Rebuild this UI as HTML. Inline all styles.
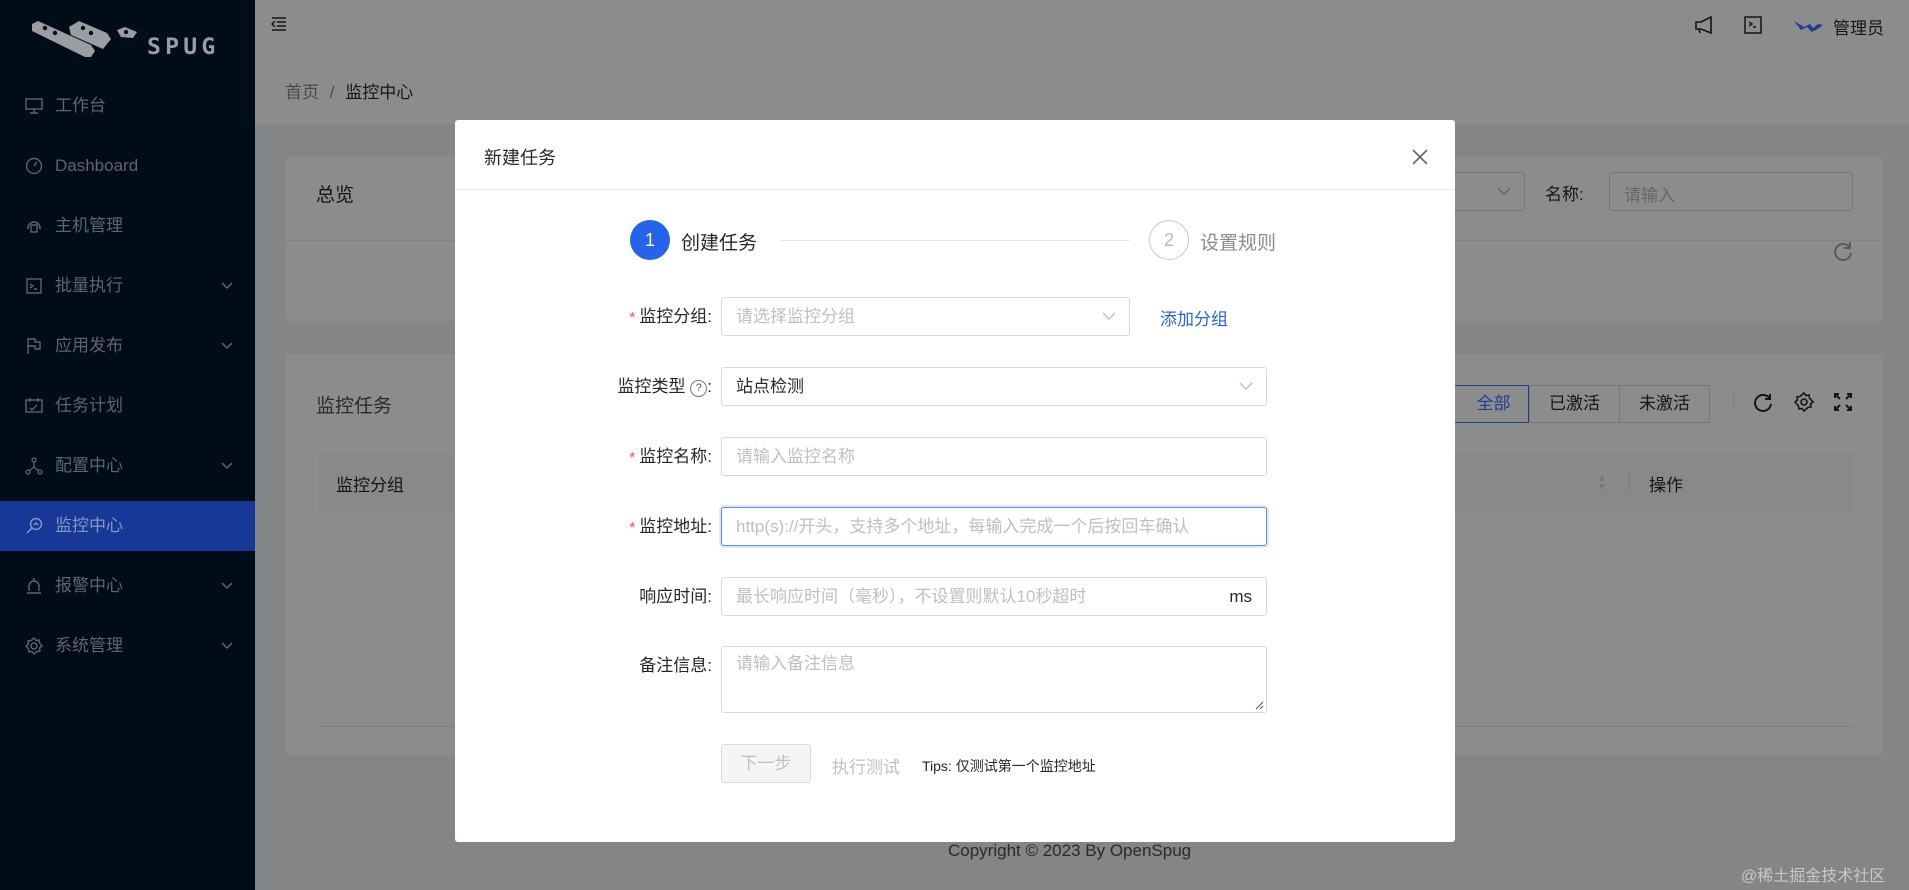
<!DOCTYPE html>
<html><head><meta charset="utf-8"><style>
*{box-sizing:border-box;margin:0;padding:0}
body{width:1909px;height:890px;overflow:hidden;position:relative;background:#848586;font-family:"Liberation Sans","Noto Sans CJK SC",sans-serif;color:#151515}
.a{position:absolute}
.side{left:0;top:0;width:255px;height:890px;background:#000c17}
.mi{position:absolute;left:0;width:255px;height:50px;color:#5d656d;font-size:17px;line-height:50px;padding-left:55px}
.mi svg{position:absolute;left:25px;top:16px}
.mi .ch{position:absolute;left:220px;top:14px}
.mi.act{background:#173896;color:#8796c0}
.card{background:#8c8c8c;border-radius:3px}
.modal{left:455px;top:120px;width:1000px;height:722px;background:#fff;border-radius:3px}
.inp{position:absolute;left:721px;width:546px;height:39px;border:1px solid #d9d9d9;border-radius:3px;font-size:17px;line-height:37px;padding-left:14px;color:#bfbfbf;background:#fff}
.row{position:absolute;left:455px;width:257px;height:39px;line-height:39px;text-align:right;font-size:17px;color:#262626}
.req{color:#ff4d4f;font-size:15px;margin-right:4px}
</style></head><body>
<div class="a side">
 <svg class="a" style="left:31px;top:19px" width="108" height="40" viewBox="0 0 108 40">
  <g fill="#9a9ea3"><path d="M1 5 L7 2 L60 26 L64 32 L60 38 L54 38 L1 12Z"/><path d="M38 8 L48 2 L76 14 L80 20 L72 30 L40 16Z"/><path d="M86 11 L94 8 L106 13 L102 19 L90 18Z"/></g>
  <g fill="#000c17"><circle cx="14" cy="9" r="2.2"/><circle cx="24" cy="14" r="2.2"/><circle cx="52" cy="9" r="2.2"/><circle cx="60" cy="14" r="2.2"/><circle cx="95" cy="13" r="2.2"/></g>
 </svg>
 <div class="a" style="left:147px;top:35px;font-size:22px;font-weight:bold;color:#9a9ea3;letter-spacing:4px;font-family:'DejaVu Sans Mono',monospace;transform:scaleX(1.05);transform-origin:left">SPUG</div>
 <div class="mi" style="top:81px"><svg width="18" height="18" viewBox="0 0 18 18" fill="none" stroke="#5d656d" stroke-width="1.4"><rect x="1" y="2" width="16" height="10"/><path d="M9 12v4M5 16h8"/></svg>工作台</div>
 <div class="mi" style="top:141px"><svg width="18" height="18" viewBox="0 0 18 18" fill="none" stroke="#5d656d" stroke-width="1.4"><circle cx="9" cy="9" r="7.5"/><path d="M9 9l3-4"/></svg>Dashboard</div>
 <div class="mi" style="top:201px"><svg width="18" height="18" viewBox="0 0 18 18" fill="none" stroke="#5d656d" stroke-width="1.4"><path d="M3 11a6 6 0 0 1 12 0M2 11h2M14 11h2"/><rect x="6" y="8" width="6" height="7"/></svg>主机管理</div>
 <div class="mi" style="top:261px"><svg width="18" height="18" viewBox="0 0 18 18" fill="none" stroke="#5d656d" stroke-width="1.4"><rect x="2" y="2" width="14" height="14"/><path d="M5 7l3 2-3 2M9 12h3"/></svg>批量执行<svg class="ch" width="14" height="20" viewBox="0 0 14 20" fill="none" stroke="#5d656d" stroke-width="1.5"><path d="M2 8l5 5 5-5"/></svg></div>
 <div class="mi" style="top:321px"><svg width="18" height="18" viewBox="0 0 18 18" fill="none" stroke="#5d656d" stroke-width="1.4"><path d="M3 17V2h7v3h5v7h-5V9H3"/></svg>应用发布<svg class="ch" width="14" height="20" viewBox="0 0 14 20" fill="none" stroke="#5d656d" stroke-width="1.5"><path d="M2 8l5 5 5-5"/></svg></div>
 <div class="mi" style="top:381px"><svg width="18" height="18" viewBox="0 0 18 18" fill="none" stroke="#5d656d" stroke-width="1.4"><rect x="1" y="3" width="16" height="12"/><path d="M5 1v4M13 1v4M5 11l2 2 5-5"/></svg>任务计划</div>
 <div class="mi" style="top:441px"><svg width="18" height="18" viewBox="0 0 18 18" fill="none" stroke="#5d656d" stroke-width="1.3"><circle cx="9" cy="3" r="2"/><circle cx="3" cy="15" r="2"/><circle cx="15" cy="15" r="2"/><path d="M9 5v5L4 14M9 10l5 4"/></svg>配置中心<svg class="ch" width="14" height="20" viewBox="0 0 14 20" fill="none" stroke="#5d656d" stroke-width="1.5"><path d="M2 8l5 5 5-5"/></svg></div>
 <div class="mi act" style="top:501px"><svg width="18" height="18" viewBox="0 0 18 18" fill="none" stroke="#8796c0" stroke-width="1.5"><circle cx="11" cy="7" r="5.5"/><path d="M7 11l-5 5M9 8l2-2 2 2"/></svg>监控中心</div>
 <div class="mi" style="top:561px"><svg width="18" height="18" viewBox="0 0 18 18" fill="none" stroke="#5d656d" stroke-width="1.4"><path d="M4 14V9a5 5 0 0 1 10 0v5M2 16h14M9 1v2"/></svg>报警中心<svg class="ch" width="14" height="20" viewBox="0 0 14 20" fill="none" stroke="#5d656d" stroke-width="1.5"><path d="M2 8l5 5 5-5"/></svg></div>
 <div class="mi" style="top:621px"><svg width="18" height="18" viewBox="0 0 18 18" fill="none" stroke="#5d656d" stroke-width="1.4"><circle cx="9" cy="9" r="3"/><path d="M9 1l2 2.5 3-.5.5 3L17 9l-2.5 2 .5 3-3 .5L9 17l-2-2.5-3 .5-.5-3L1 9l2.5-2-.5-3 3-.5z"/></svg>系统管理<svg class="ch" width="14" height="20" viewBox="0 0 14 20" fill="none" stroke="#5d656d" stroke-width="1.5"><path d="M2 8l5 5 5-5"/></svg></div>
</div>
<div class="a" style="left:255px;top:0;width:1654px;height:58px;background:#8c8c8c"></div>
<svg class="a" style="left:271px;top:17px" width="16" height="14" viewBox="0 0 16 14" fill="none" stroke="#151515" stroke-width="1.5"><path d="M1 1h14M6 5h9M6 9h9M1 13h14M4 4L1 7l3 3"/></svg>
<svg class="a" style="left:1694px;top:15px" width="20" height="20" viewBox="0 0 20 20" fill="none" stroke="#151515" stroke-width="1.6"><path d="M17 2v16L7 14H2V7h5z M5 14l1 4"/></svg>
<svg class="a" style="left:1744px;top:16px" width="18" height="18" viewBox="0 0 18 18" fill="none" stroke="#151515" stroke-width="1.5"><rect x="1" y="1" width="16" height="16"/><path d="M5 6l3 2-3 2M9 11h3"/></svg>
<svg class="a" style="left:1793px;top:16px" width="32" height="18" viewBox="0 0 32 18"><path d="M1 5l10 6 6-3 3 4 5-4 5 1-4 3-7 4-5-5-6 3z" fill="#1d3f9a"/></svg>
<div class="a" style="left:1833px;top:14px;font-size:17px">管理员</div>
<div class="a" style="left:255px;top:58px;width:1654px;height:66px;background:#8c8c8c"></div>
<div class="a" style="left:285px;top:78px;font-size:17px;color:#4a4a4a">首页 <span style="margin:0 6px">/</span> <span style="color:#151515">监控中心</span></div>
<div class="a card" style="left:286px;top:157px;width:1597px;height:164px"></div>
<div class="a" style="left:286px;top:240px;width:1597px;height:1px;background:#828282"></div>
<div class="a" style="left:316px;top:180px;font-size:19px">总览</div>
<div class="a" style="left:1400px;top:172px;width:125px;height:39px;border:1px solid #777;border-radius:3px"></div>
<svg class="a" style="left:1497px;top:186px" width="14" height="10" viewBox="0 0 14 10" fill="none" stroke="#666" stroke-width="1.3"><path d="M1 2l6 6 6-6"/></svg>
<div class="a" style="left:1545px;top:180px;font-size:17px">名称:</div>
<div class="a" style="left:1609px;top:172px;width:244px;height:39px;border:1px solid #777;border-radius:3px;font-size:17px;color:#666;padding:8px 14px">请输入</div>
<svg class="a" style="left:1833px;top:240px" width="20" height="22" viewBox="0 0 20 22" fill="none" stroke="#555" stroke-width="1.8"><path d="M17 8A8 8 0 1 0 18 13M17 2v6h-6"/></svg>
<div class="a card" style="left:286px;top:354px;width:1597px;height:401px"></div>
<div class="a" style="left:316px;top:391px;font-size:19px;color:#2a2a2a">监控任务</div>
<div class="a" style="left:1440px;top:385px;width:89px;height:38px;border:1px solid #1d3f9a;color:#1d3f9a;font-size:17px;line-height:36px;text-align:center;padding-left:18px">全部</div>
<div class="a" style="left:1529px;top:385px;width:91px;height:38px;border:1px solid #777;font-size:17px;line-height:36px;text-align:center">已激活</div>
<div class="a" style="left:1619px;top:385px;width:91px;height:38px;border:1px solid #777;font-size:17px;line-height:36px;text-align:center">未激活</div>
<div class="a" style="left:1733px;top:393px;width:1px;height:20px;background:#808080"></div>
<svg class="a" style="left:1753px;top:393px" width="20" height="20" viewBox="0 0 20 20" fill="none" stroke="#151515" stroke-width="2"><path d="M17 6A8 8 0 1 0 18 11M17 1v5h-5"/></svg>
<svg class="a" style="left:1794px;top:392px" width="20" height="20" viewBox="0 0 20 20" fill="none" stroke="#151515" stroke-width="1.6"><circle cx="10" cy="10" r="3"/><path d="M10 1l2 2.5 3-.5.5 3L19 10l-2.5 2 .5 3-3 .5L10 19l-2-2.5-3 .5-.5-3L1 10l2.5-2-.5-3 3-.5z"/></svg>
<svg class="a" style="left:1834px;top:393px" width="18" height="18" viewBox="0 0 18 18" fill="none" stroke="#151515" stroke-width="2"><path d="M1 5V1h4M13 1h4v4M17 13v4h-4M5 17H1v-4M1 1l5 5M17 1l-5 5M17 17l-5-5M1 17l5-5"/></svg>
<div class="a" style="left:319px;top:453px;width:1534px;height:58px;background:#898989"></div>
<div class="a" style="left:336px;top:471px;font-size:17px">监控分组</div>
<div class="a" style="left:1597px;top:474px;font-size:10px;color:#777;line-height:9px">▲<br>▼</div>
<div class="a" style="left:1629px;top:472px;width:1px;height:20px;background:#7a7a7a"></div>
<div class="a" style="left:1649px;top:471px;font-size:17px">操作</div>
<div class="a" style="left:319px;top:726px;width:1534px;height:1px;background:#7e7e7e"></div>
<div class="a" style="left:948px;top:841px;font-size:17px;color:#2a2a2a">Copyright © 2023 By OpenSpug</div>
<div class="a" style="left:1741px;top:862px;font-size:16px;color:#c8c8c8">@稀土掘金技术社区</div>
<div class="a modal"></div>
<div class="a" style="left:484px;top:144px;font-size:18px;color:#262626">新建任务</div>
<svg class="a" style="left:1412px;top:149px" width="16" height="16" viewBox="0 0 16 16" stroke="#666" stroke-width="1.6"><path d="M1 1l14 14M15 1L1 15"/></svg>
<div class="a" style="left:455px;top:189px;width:1000px;height:1px;background:#ececec"></div>
<div class="a" style="left:630px;top:220px;width:40px;height:40px;border-radius:50%;background:#2563eb;color:#fff;font-size:18px;line-height:40px;text-align:center">1</div>
<div class="a" style="left:681px;top:228px;font-size:19px;color:#262626">创建任务</div>
<div class="a" style="left:780px;top:240px;width:350px;height:1px;background:#e8e8e8"></div>
<div class="a" style="left:1149px;top:220px;width:40px;height:40px;border-radius:50%;border:1px solid #c8c8c8;color:#bbb;font-size:18px;line-height:38px;text-align:center">2</div>
<div class="a" style="left:1200px;top:228px;font-size:19px;color:#8c8c8c">设置规则</div>
<div class="row" style="top:297px"><span class="req">*</span>监控分组:</div>
<div class="inp" style="top:297px;width:409px">请选择监控分组</div>
<svg class="a" style="left:1102px;top:312px" width="14" height="9" viewBox="0 0 14 9" fill="none" stroke="#bbb" stroke-width="1.3"><path d="M1 1l6 6 6-6"/></svg>
<div class="a" style="left:1160px;top:305px;font-size:17px;color:#2563eb">添加分组</div>
<div class="row" style="top:367px">监控类型 <span style="display:inline-block;width:17px;height:17px;border:1px solid #777;border-radius:50%;font-size:11px;line-height:15px;text-align:center;vertical-align:1px;color:#555">?</span>:</div>
<div class="inp" style="top:367px;color:#262626">站点检测</div>
<svg class="a" style="left:1239px;top:382px" width="14" height="9" viewBox="0 0 14 9" fill="none" stroke="#bbb" stroke-width="1.3"><path d="M1 1l6 6 6-6"/></svg>
<div class="row" style="top:437px"><span class="req">*</span>监控名称:</div>
<div class="inp" style="top:437px">请输入监控名称</div>
<div class="row" style="top:507px"><span class="req">*</span>监控地址:</div>
<div class="inp" style="top:507px;border-color:#5a8bf0;box-shadow:0 0 0 2px rgba(37,99,235,.15)">http(s)://开头，支持多个地址，每输入完成一个后按回车确认</div>
<div class="row" style="top:577px">响应时间:</div>
<div class="inp" style="top:577px">最长响应时间（毫秒），不设置则默认10秒超时<span style="position:absolute;right:14px;color:#262626">ms</span></div>
<div class="row" style="top:646px">备注信息:</div>
<div class="inp" style="top:646px;height:67px;line-height:34px">请输入备注信息</div>
<svg class="a" style="left:1255px;top:701px" width="9" height="9" viewBox="0 0 9 9" stroke="#555" stroke-width="1"><path d="M1 8L8 1M5 8L8 5"/></svg>
<div class="a" style="left:721px;top:744px;width:90px;height:39px;border:1px solid #d9d9d9;border-radius:3px;background:#f5f5f5;color:#bfbfbf;font-size:17px;line-height:37px;text-align:center">下一步</div>
<div class="a" style="left:832px;top:753px;font-size:17px;color:#bfbfbf">执行测试</div>
<div class="a" style="left:922px;top:756px;font-size:14px;color:#262626">Tips: 仅测试第一个监控地址</div>
</body></html>
